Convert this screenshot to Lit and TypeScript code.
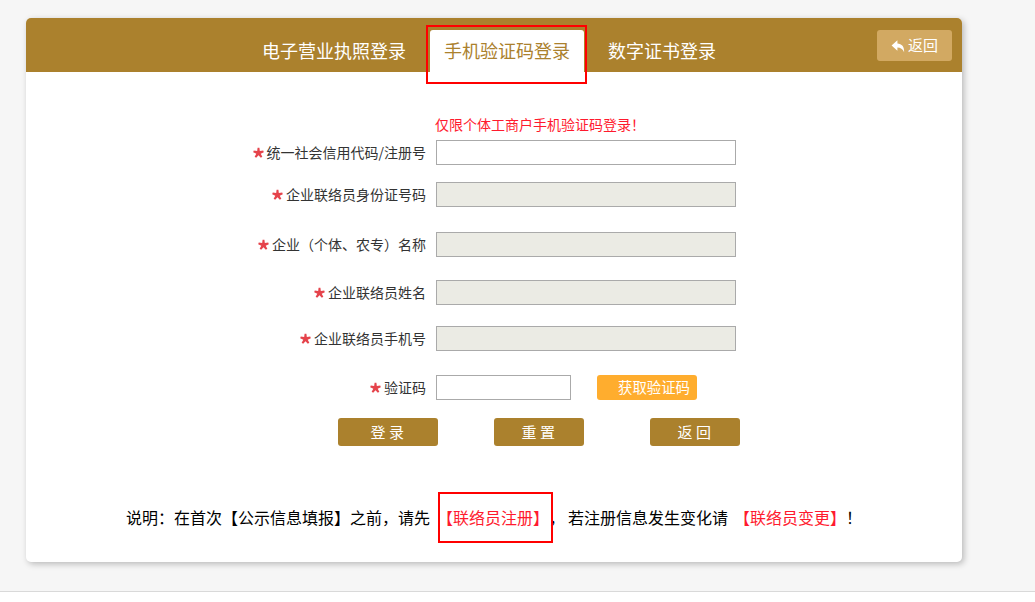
import { LitElement, html, css } from "lit";
import { customElement } from "lit/decorators.js";

const rows = [
  { label: "统一社会信用代码/注册号", cls: "g0", filled: false },
  { label: "企业联络员身份证号码", cls: "g1", filled: true },
  { label: "企业（个体、农专）名称", cls: "g2", filled: true },
  { label: "企业联络员姓名", cls: "g3", filled: true },
  { label: "企业联络员手机号", cls: "g4", filled: true },
];

@customElement("app-root")
export class AppRoot extends LitElement {
  static styles = css`
    :host {
      display: block;
      height: 602px;
      background: #fff;
      font-family: "Noto Sans CJK SC", "Liberation Sans", sans-serif;
      overflow: hidden;
    }
    .page {
      box-sizing: border-box;
      height: 592px;
      background: #f6f6f6;
      border-bottom: 1px solid #d9d9d9;
      padding: 18px 73px 0 26px;
    }
    .card {
      position: relative;
      height: 544px;
      background: #fff;
      border-radius: 5px;
      box-shadow: 2px 2px 6px rgba(0, 0, 0, 0.25);
    }
    .head {
      position: relative;
      display: flex;
      height: 54px;
      background: #ab812d;
      border-radius: 5px 5px 0 0;
      padding-left: 236px;
      box-sizing: border-box;
      font-size: 18px;
      color: #fff;
    }
    .tab {
      padding-top: 19px;
      line-height: 26px;
      white-space: nowrap;
    }
    .tab.active {
      width: 154px;
      box-sizing: border-box;
      margin: 12px 24px 0 24px;
      padding: 7px 0 0 14px;
      background: #fff;
      color: #ab812d;
      border-radius: 3px 3px 0 0;
    }
    .back {
      position: absolute;
      top: 12px;
      right: 10px;
      width: 75px;
      height: 31px;
      border-radius: 3px;
      background: #d2a962;
      display: flex;
      align-items: center;
      justify-content: center;
      gap: 3px;
      font-size: 15px;
      color: #fff;
    }
    .back span {
      margin-bottom: 2px;
    }
    .back svg {
      width: 14px;
      height: 14px;
      fill: #fff;
    }
    .form {
      display: flex;
      flex-direction: column;
    }
    .notice {
      margin: 42px 0 0 409px;
      height: 26px;
      line-height: 20px;
      font-size: 14px;
      color: #ff1a2e;
    }
    .row {
      display: flex;
      align-items: center;
      height: 25px;
    }
    .g0 { margin-top: 0; }
    .g1 { margin-top: 17px; }
    .g2 { margin-top: 25px; }
    .g3 { margin-top: 23px; }
    .g4 { margin-top: 21px; }
    .g5 { margin-top: 24px; }
    .label {
      width: 400px;
      margin-right: 10px;
      font-size: 14px;
      color: #333;
      white-space: nowrap;
      display: flex;
      justify-content: flex-end;
      align-items: center;
      gap: 3px;
    }
    .label span {
      margin-bottom: 2px;
    }
    .star {
      width: 11px;
      height: 11px;
      fill: #e5434b;
    }
    input {
      box-sizing: border-box;
      width: 300px;
      height: 25px;
      padding: 0 4px;
      margin: 0;
      border: 1px solid #aaa;
      border-radius: 0;
      background: #fff;
      outline: none;
    }
    input.filled {
      background: #ebebe4;
    }
    input.short {
      width: 135px;
    }
    .code {
      box-sizing: border-box;
      width: 100px;
      height: 25px;
      margin-left: 26px;
      padding-left: 21px;
      line-height: 24px;
      border-radius: 3px;
      background: #ffad2e;
      color: #fff;
      font-size: 14.4px;
      white-space: nowrap;
    }
    .actions {
      display: flex;
      margin: 18px 0 0 312px;
    }
    .btn {
      box-sizing: border-box;
      width: 90px;
      height: 28px;
      padding-left: 2px;
      line-height: 27px;
      border-radius: 3px;
      background: #ab812d;
      color: #fff;
      font-size: 15px;
      letter-spacing: 3.5px;
      text-align: center;
      margin-right: 66px;
    }
    .btn.wide {
      width: 100px;
      margin-right: 56px;
    }
    .note {
      margin: 59px 0 0 100px;
      line-height: 24px;
      font-size: 16px;
      color: #000;
      white-space: nowrap;
      display: flex;
    }
    .note .link {
      color: #ff1a2e;
    }
    .m1 { margin-left: 7px; }
    .m2 { margin-left: 3px; }
    .m3 { margin-left: 6px; }
    .mark {
      position: absolute;
      box-sizing: border-box;
      border: 2px solid #f00;
      pointer-events: none;
    }
    .mark.a {
      left: 400px;
      top: 7px;
      width: 161px;
      height: 59px;
    }
    .mark.b {
      left: 412px;
      top: 474px;
      width: 115px;
      height: 51px;
    }
  `;

  private star() {
    return html`<svg class="star" viewBox="0 0 24 24" aria-hidden="true">
      <path d="M10 1.500h4l.9 7.450 7.400-1.400 1.300 3.800-6.800 3.150 3.600 6.600-3.300 2.400L12 18l-5.100 5.500-3.300-2.400 3.600-6.600L.4 11.350l1.300-3.800 7.400 1.400z" />
    </svg>`;
  }

  render() {
    return html`
      <div class="page">
        <div class="card">
          <div class="head">
            <div class="tab">电子营业执照登录</div>
            <div class="tab active">手机验证码登录</div>
            <div class="tab">数字证书登录</div>
            <div class="back">
              <svg viewBox="0 0 24 24" aria-hidden="true">
                <path d="M11 2v5.600C18.500 8 23 13 22.500 22.500 20 17 16.500 14.800 11 14.600V20L1 11z" />
              </svg>
              <span>返回</span>
            </div>
          </div>
          <div class="form">
            <div class="notice">仅限个体工商户手机验证码登录！</div>
            ${rows.map(
              (r) => html`<div class="row ${r.cls}">
                <div class="label">${this.star()}<span>${r.label}</span></div>
                <input class=${r.filled ? "filled" : ""} />
              </div>`
            )}
            <div class="row g5">
              <div class="label">${this.star()}<span>验证码</span></div>
              <input class="short" />
              <div class="code">获取验证码</div>
            </div>
            <div class="actions">
              <div class="btn wide">登录</div>
              <div class="btn">重置</div>
              <div class="btn">返回</div>
            </div>
            <div class="note">
              <span>说明：在首次【公示信息填报】之前，请先</span>
              <span class="link m1">【联络员注册】</span>
              <span>，</span>
              <span class="m2">若注册信息发生变化请</span>
              <span class="link m3">【联络员变更】</span>
              <span>！</span>
            </div>
          </div>
          <div class="mark a"></div>
          <div class="mark b"></div>
        </div>
      </div>
    `;
  }
}
